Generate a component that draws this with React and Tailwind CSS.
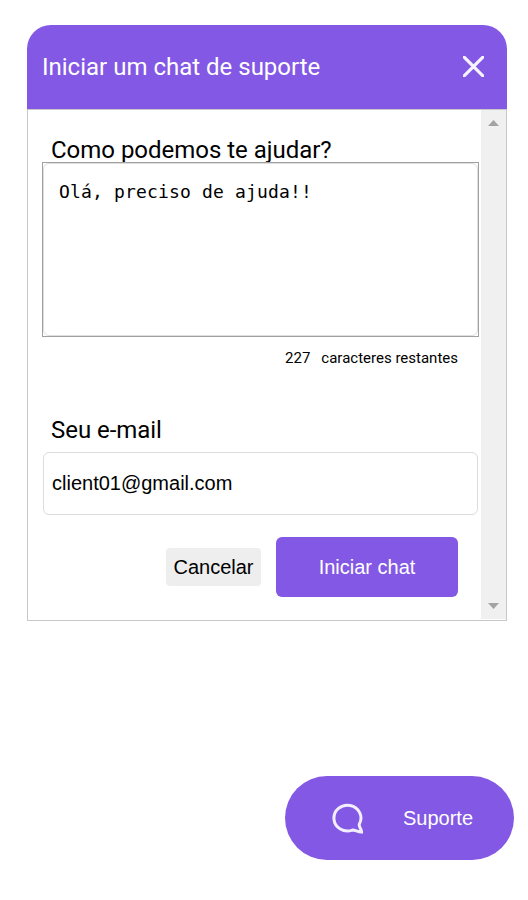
const roboto = "font-['Roboto','Liberation_Sans',sans-serif]";
const arial = "font-['Liberation_Sans',Arial,sans-serif]";

function CloseIcon() {
  return (
    <svg className="mb-px" width="21" height="21" viewBox="0 0 21 21" fill="none" stroke="#fff" strokeOpacity="0.93" strokeWidth="3.2">
      <path d="M0 0 21 21M21 0 0 21" />
    </svg>
  );
}

function ChatIcon() {
  return (
    <svg width="32" height="32" viewBox="0 0 32 32" fill="none" stroke="#fff" strokeOpacity="0.9" strokeWidth="3" strokeLinejoin="miter">
      <path d="M27.3 22.2A13.5 12.9 0 1 0 20.3 28.1C22.8 27.8 25.4 29.8 29.5 30.1C29.8 27.2 26.6 25 27.3 22.2Z" />
    </svg>
  );
}

function Scrollbar() {
  return (
    <div className="flex h-[509px] w-[25px] shrink-0 flex-col items-center justify-between bg-[#f0f0f0] pt-[10px] pb-[10px]">
      <svg width="11" height="6" viewBox="0 0 11 6" fill="#a3a3a3"><path d="M0 6 5.5 0 11 6Z" /></svg>
      <svg width="11" height="6" viewBox="0 0 11 6" fill="#a3a3a3"><path d="M0 0H11L5.5 6Z" /></svg>
    </div>
  );
}

export default function App() {
  return (
    <main className={`flex h-[900px] w-[528px] flex-col bg-white pt-[25px] pl-[27px] text-black ${roboto}`}>
      <section className="w-[480px]">
        <header className="flex h-[84px] items-center justify-between rounded-t-[24px] bg-[#8358e4] pr-[23px] pl-[15px] text-white">
          <h1 className="text-[24px] leading-[28px] whitespace-nowrap">Iniciar um chat de suporte</h1>
          <CloseIcon />
        </header>
        <div className="flex h-[512px] border border-[#c8c8c8]">
          <form className="flex min-w-0 flex-1 flex-col pt-[26px] pl-[14px]">
            <label className="h-[26px] pl-[9px] text-[24px] leading-[28px] tracking-[-0.02px] whitespace-nowrap">Como podemos te ajudar?</label>
            <div className="h-[175px] w-[437px] border border-[#a0a0a0] bg-white">
              <div className="h-full rounded-[6px] border border-[#dedede] px-[15px] pt-[16px] font-['DejaVu_Sans_Mono',monospace] text-[18px] leading-[24px] tracking-[0.16px] whitespace-pre">Olá, preciso de ajuda!!</div>
            </div>
            <div className="mt-[12px] flex h-[18px] items-center justify-end gap-[11px] pr-[23px] leading-[18px]">
              <span className="text-[15px]">227</span>
              <span className="text-[15px]">caracteres restantes</span>
            </div>
            <label className="mt-[49px] h-[28px] pl-[9px] text-[24px] leading-[28px] tracking-[-0.05px]">Seu e-mail</label>
            <div className={`mt-[8px] ml-[1px] flex h-[63px] w-[435px] items-center rounded-[6px] border border-[#dcdcdc] px-[8px] pb-[2px] text-[20px] leading-[24px] ${arial}`}>client01@gmail.com</div>
            <div className={`mt-[22px] flex items-center justify-end gap-[15px] pr-[23px] text-[20px] ${arial}`}>
              <button type="button" className="h-[38px] w-[95px] rounded-[4px] bg-[#eeeeee]">Cancelar</button>
              <button type="button" className="h-[60px] w-[182px] rounded-[6px] bg-[#8358e4] text-white">Iniciar chat</button>
            </div>
          </form>
          <Scrollbar />
        </div>
      </section>
      <button type="button" className={`mt-[155px] ml-[258px] flex h-[84px] w-[229px] items-center rounded-full bg-[#8358e4] pl-[47px] text-[20px] text-white ${arial}`}>
        <ChatIcon />
        <span className="ml-[39px]">Suporte</span>
      </button>
    </main>
  );
}
